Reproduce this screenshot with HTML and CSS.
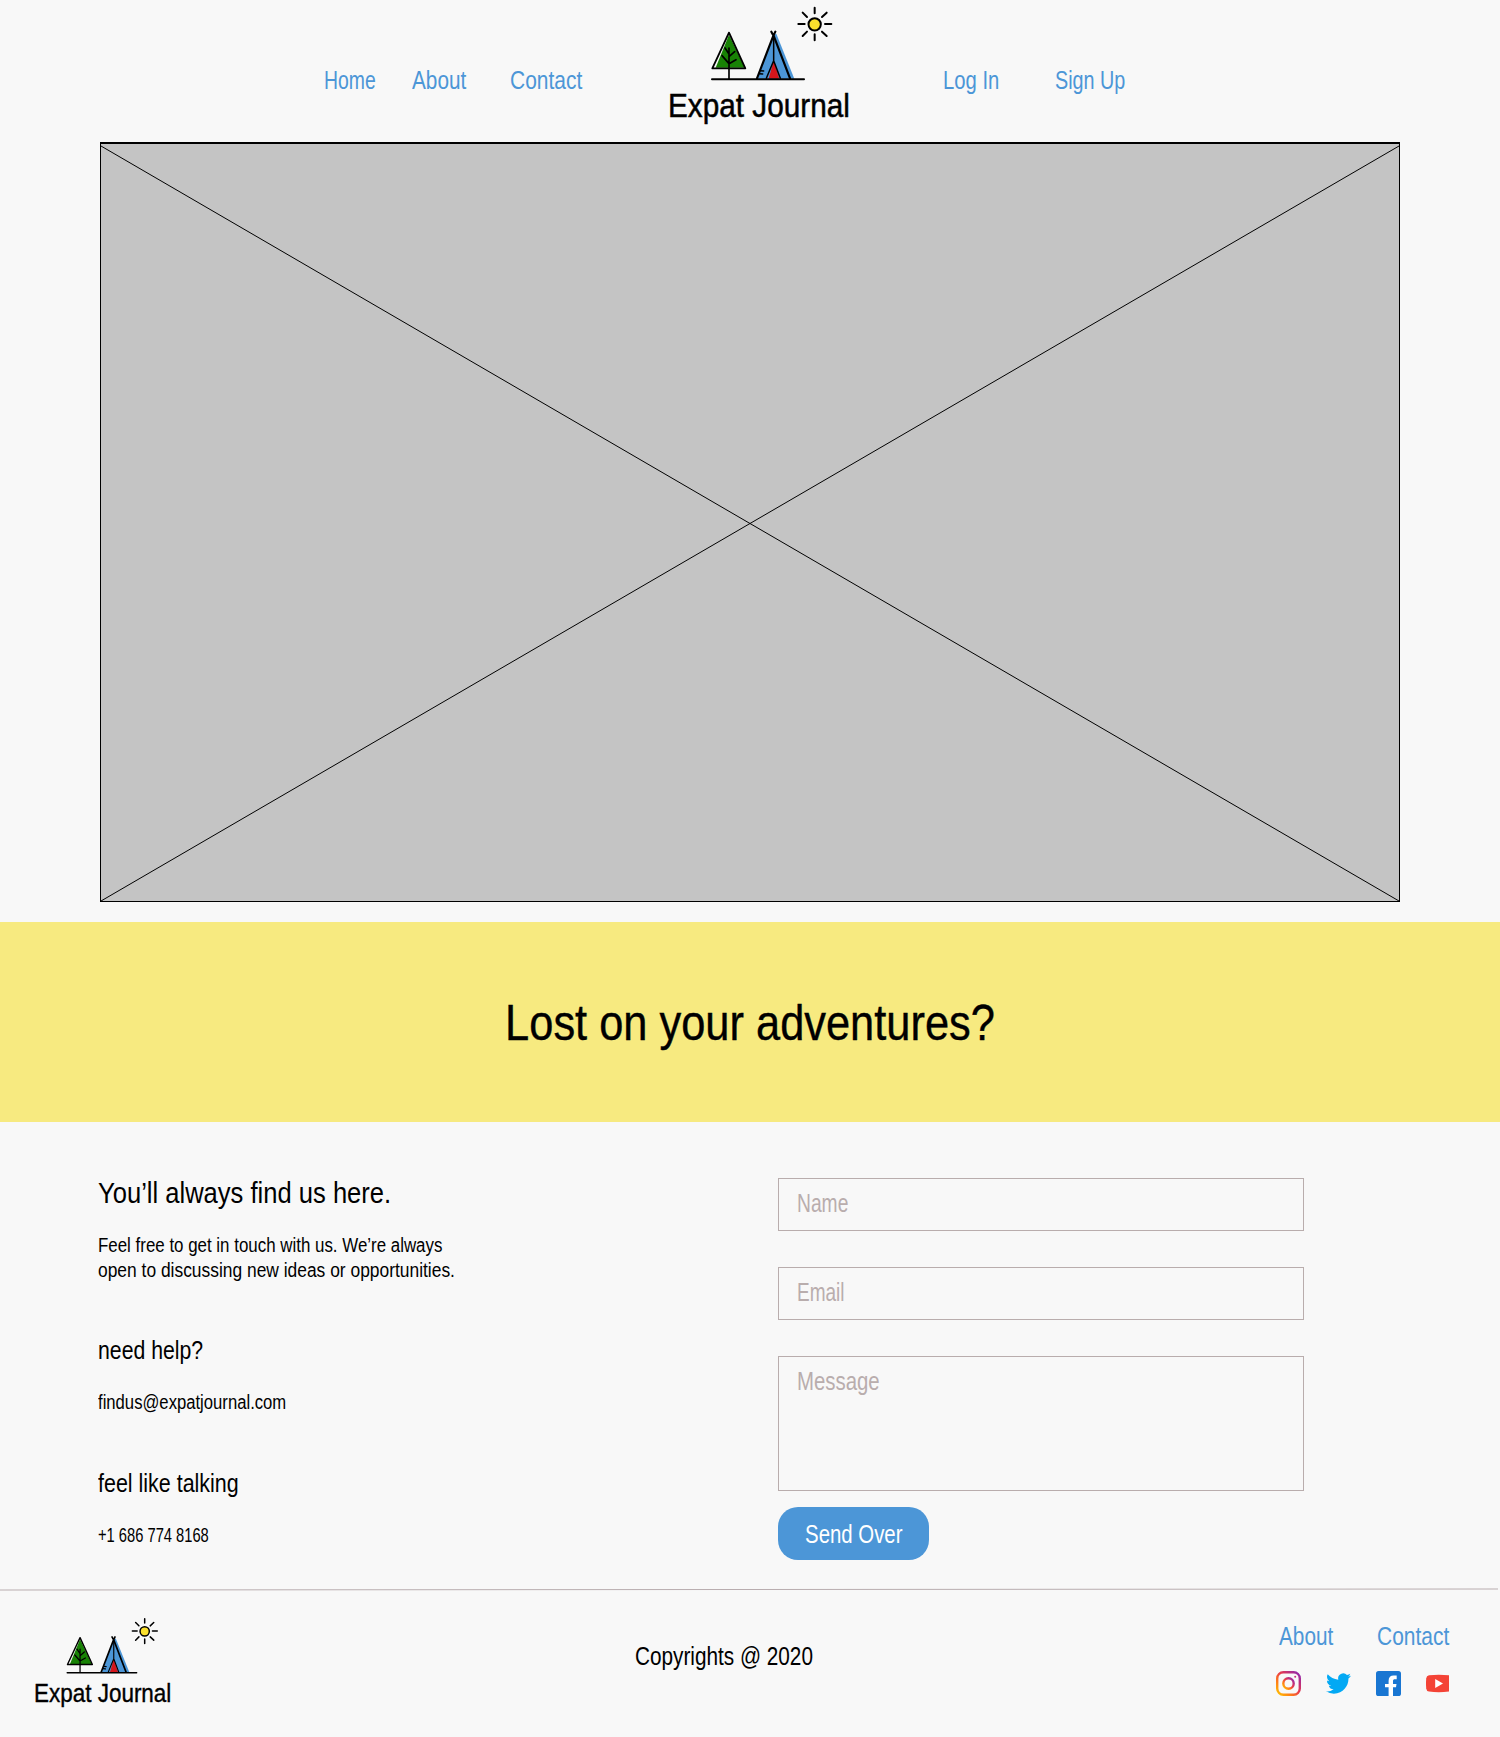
FILE: index.html
```html
<!DOCTYPE html>
<html lang="en">
<head>
<meta charset="utf-8">
<title>Expat Journal – Contact</title>
<link rel="stylesheet" href="styles.css">
</head>
<body>
<svg class="defs" width="0" height="0" aria-hidden="true">
  <symbol id="logo" viewBox="60 0 600 400">
    <path d="M227 203L267 104L314 203Z" fill="#188205"/>
    <path d="M353 236L400 106L409 101L463 236Z" fill="#4c96d7"/>
    <path d="M386 236L401 182L418 236Z" fill="#d4161c"/>
    <g fill="none" stroke="#000" stroke-width="6" stroke-linecap="round" stroke-linejoin="round">
      <path d="M267 98L217 205H316Z" stroke-width="5.500"/>
      <path d="M267 236V144M255 144L267 162M246 167L267 191L288 179M267 170L284 155" stroke-width="5"/>
      <path d="M216 237.500H492"/>
      <path d="M394 95L402 110L450 235M406 95L399 110L351 235" stroke-width="6.500"/>
      <path d="M401 104V182L379 235M401 182L421 235" stroke-width="4.500"/>
      <path d="M361 212L371 213M358 221L368 222" stroke-width="4.500"/>
      <circle cx="524" cy="73" r="18.500" fill="#fbe02d"/>
      <path d="M524 23V40M524 103V121M475 72H494M555 72H574M488 38L501 51M560 38L546 51M488 108L501 95M560 108L546 95"/>
    </g>
    <text x="84" y="352" font-size="100" textLength="546" lengthAdjust="spacingAndGlyphs" stroke="#000" stroke-width="1.500">Expat Journal</text>
  </symbol>
  <linearGradient id="insta" x1="0" y1="1" x2="1" y2="0">
    <stop offset="0" stop-color="#ffc400"/><stop offset=".3" stop-color="#ff7a1a"/><stop offset=".55" stop-color="#e83a4c"/><stop offset="1" stop-color="#8a25b5"/>
  </linearGradient>
</svg>

<header class="header">
  <a class="link home">Home</a>
  <a class="link about">About</a>
  <a class="link contact">Contact</a>
  <svg class="logo"><use href="#logo"/></svg>
  <a class="link login">Log In</a>
  <a class="link signup">Sign Up</a>
</header>

<main>
  <div class="hero">
    <svg viewBox="0 0 1298 757" preserveAspectRatio="none"><path d="M0 2L1298 757M1298 2L0 757" stroke="#000" fill="none"/></svg>
  </div>
  <section class="banner"><h1>Lost on your adventures?</h1></section>
  <section class="content">
    <div class="info">
      <h2 class="find">You’ll always find us here.</h2>
      <p class="intro"><span class="line1">Feel free to get in touch with us. We’re always</span><span class="line2">open to discussing new ideas or opportunities.</span></p>
      <h3 class="help">need help?</h3>
      <p class="mail">findus@expatjournal.com</p>
      <h3 class="talk">feel like talking</h3>
      <p class="phone">+1 686 774 8168</p>
    </div>
    <div class="form">
      <div class="field name"><span>Name</span></div>
      <div class="field email"><span>Email</span></div>
      <div class="field message"><span>Message</span></div>
      <button class="send" type="button"><span>Send Over</span></button>
    </div>
  </section>
</main>

<svg class="divider" viewBox="0 0 1500 3"><path d="M0 2L1498 1" stroke="#b9adaf"/></svg>
<footer class="footer">
  <svg class="logo small"><use href="#logo"/></svg>
  <p class="copy"><span>Copyrights @ 2020</span></p>
  <div class="side">
    <nav class="links"><a class="link about">About</a><a class="link contact">Contact</a></nav>
    <div class="social">
      <svg viewBox="0 0 25 25"><g fill="none" stroke="url(#insta)"><rect x="1.200" y="1.200" width="22.600" height="22.600" rx="6.200" stroke-width="2.400"/><circle cx="12.500" cy="12.500" r="5.200" stroke-width="2.400"/></g><circle cx="19.200" cy="5.800" r="1" fill="#c9307c"/></svg>
      <svg viewBox="0 0 24 24"><path fill="#03a9f4" d="M23.953 4.570a10 10 0 01-2.825.775 4.958 4.958 0 002.163-2.723c-.951.555-2.005.959-3.127 1.184a4.920 4.920 0 00-8.384 4.482C7.690 8.095 4.067 6.130 1.640 3.162a4.822 4.822 0 00-.666 2.475c0 1.710.870 3.213 2.188 4.096a4.904 4.904 0 01-2.228-.616v.060a4.923 4.923 0 003.946 4.827 4.996 4.996 0 01-2.212.085 4.936 4.936 0 004.604 3.417 9.867 9.867 0 01-6.102 2.105c-.390 0-.779-.023-1.170-.067a13.995 13.995 0 007.557 2.209c9.053 0 13.998-7.496 13.998-13.985 0-.210 0-.420-.015-.630A9.935 9.935 0 0024 4.590z"/></svg>
      <svg viewBox="0 0 25 25"><rect width="25" height="25" rx="2.600" fill="#1976d2"/><path fill="#fff" d="M12.600 25V16.300H9V13H12.600V9.700C12.600 6.200 14.500 4.500 17.600 4.500H20.700V8.200H18.900C17.600 8.200 17 8.800 17 10.100V13H20.500L20 16.300H17V25Z"/></svg>
      <svg class="yt" viewBox="0 0 23 25"><path fill="#f44336" d="M3 4.300Q12.500 3.400 23 4.300V20.600Q12.500 21.700 3 20.600Q.500 20.200 .200 17.500Q-.200 12.500 .200 7.500Q.500 4.700 3 4.300Z"/><path fill="#fff" d="M9.200 8L17 12.500L9.200 17Z"/></svg>
    </div>
  </div>
</footer>
</body>
</html>
```
FILE: styles.css
```css
* { box-sizing: border-box; margin: 0; padding: 0; }
body { width: 1500px; height: 1737px; overflow: hidden; background: #f8f8f8; color: #000; font: 25px/30px "Liberation Sans", sans-serif; }
.defs { display: block; }
svg { display: block; }
h1, h2, h3 { font-weight: 400; }
a, p, h1, h2, h3, span { white-space: nowrap; }
.link { color: #4c96d7; }

/* Condensed lettering: each text is narrowed from its left edge. */
.link, .info h2, .info h3, .info p, .info span, .field span, .copy span { width: max-content; transform: scaleX(var(--narrow, 1)); transform-origin: left; }
.field span, .copy span, .info span { display: block; }
.home { --narrow: .775; margin-left: -1px; }
.about { --narrow: .830; }
.contact { --narrow: .838; }
.login { --narrow: .810; }
.signup { --narrow: .790; }
.find { --narrow: .852; }
.line1 { --narrow: .845; }
.line2 { --narrow: .870; }
.help { --narrow: .850; }
.mail { --narrow: .833; }
.talk { --narrow: .858; }
.phone { --narrow: .735; }
.name { --narrow: .770; }
.email { --narrow: .760; }
.message { --narrow: .815; }
.copy { --narrow: .830; }

.header { display: grid; grid-template-columns: 87px 98px 150px 282.500px 112.500px auto; height: 142px; padding-left: 325px; }
.header .link { padding-top: 65px; }
.logo { width: 200px; height: 133.330px; }

.hero { width: 1300px; height: 760px; margin: 0 auto; background: #c4c4c4; border: 1px solid #000; border-top-width: 2px; }
.hero svg { width: 100%; height: 100%; }

.banner { height: 200px; margin-top: 20px; padding-top: 71px; background: #f7ea80; text-align: center; }
.banner h1 { font-size: 50px; line-height: 60px; transform: scaleX(.868); -webkit-text-stroke: .4px #000; }

.content { display: flex; height: 467px; padding-left: 98px; }
.info { width: 680px; padding-top: 53px; }
.info .find { font-size: 30px; line-height: 36px; }
.info p { font-size: 20px; line-height: 25px; }
.info h3 { font-size: 25px; line-height: 30px; }
.info .intro { margin-top: 22px; transform: none; }
.help { margin-top: 52px; }
.mail { margin-top: 25px; }
.talk { margin-top: 53px; }
.phone { margin-top: 25px; }

.form { display: flex; flex-direction: column; align-items: flex-start; width: 526px; padding-top: 56px; }
.field { width: 526px; height: 53px; margin-bottom: 36px; padding: 9px 0 0 18px; border: 1px solid #b9adad; color: #b9adad; }
.message { height: 135px; margin-bottom: 16px; }
.send { width: 151px; height: 53px; border: 0; border-radius: 20px; background: #4c96d7; color: #fff; font: inherit; display: flex; align-items: center; justify-content: center; }
.send span { transform: scaleX(.815); }

.divider { width: 1500px; height: 3px; margin-top: -1px; }
.footer { display: flex; padding-left: 28px; }
.small { width: 150.900px; height: 100.600px; margin-top: 21.500px; }
.copy { width: 1097px; margin-top: 50px; padding-left: 456px; }
.side { margin-top: 30px; }
.links { display: grid; grid-template-columns: 98px auto; padding-left: 3px; }
.social { display: flex; gap: 25px; margin-top: 20px; }
.social svg { width: 25px; height: 25px; flex: none; }
.social .yt { width: 23px; }
```
